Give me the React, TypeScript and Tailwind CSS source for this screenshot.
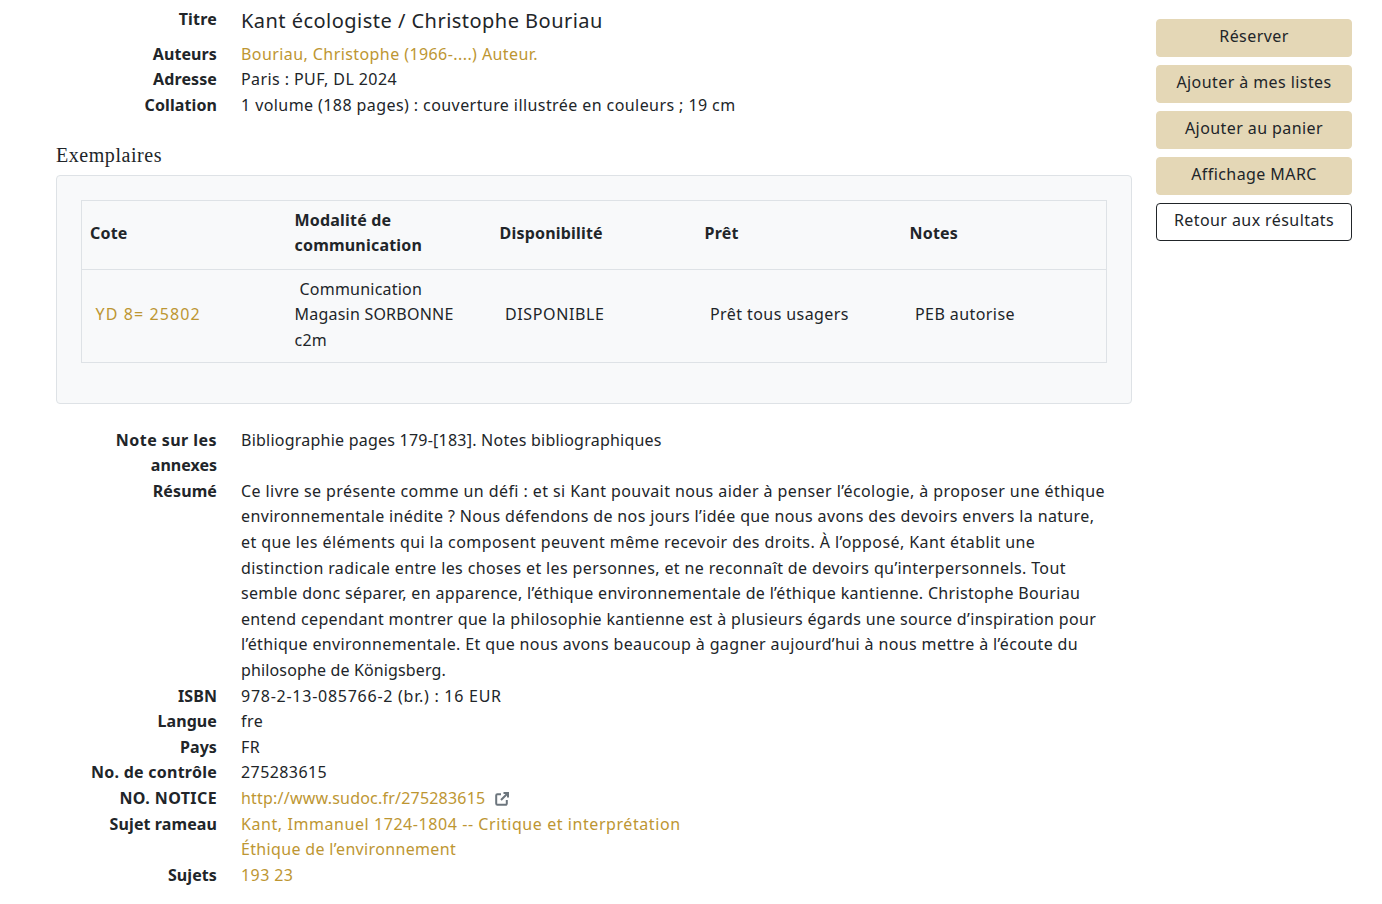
import type { ReactNode } from "react"

// letter-spacing is tuned per line, the original webfont isn't available
const resume = [
  { text: "Ce livre se présente comme un défi : et si Kant pouvait nous aider à penser l’écologie, à proposer une éthique", track: "tracking-[0.42px]" },
  { text: "environnementale inédite ? Nous défendons de nos jours l’idée que nous avons des devoirs envers la nature,", track: "tracking-[0.363px]" },
  { text: "et que les éléments qui la composent peuvent même recevoir des droits. À l’opposé, Kant établit une", track: "tracking-[0.42px]" },
  { text: "distinction radicale entre les choses et les personnes, et ne reconnaît de devoirs qu’interpersonnels. Tout", track: "tracking-[0.373px]" },
  { text: "semble donc séparer, en apparence, l’éthique environnementale de l’éthique kantienne. Christophe Bouriau", track: "tracking-[0.333px]" },
  { text: "entend cependant montrer que la philosophie kantienne est à plusieurs égards une source d’inspiration pour", track: "tracking-[0.345px]" },
  { text: "l’éthique environnementale. Et que nous avons beaucoup à gagner aujourd’hui à nous mettre à l’écoute du", track: "tracking-[0.371px]" },
  { text: "philosophe de Königsberg.", track: "tracking-[0.14px]" },
]

function Row({ label, children }: { label: ReactNode; children: ReactNode }) {
  return (
    <div className="grid grid-cols-[161px_1fr] gap-x-6">
      <div className="text-right font-bold tracking-[0.1px]">{label}</div>
      <div>{children}</div>
    </div>
  )
}

function Action({ children, outline }: { children: ReactNode; outline?: boolean }) {
  return (
    <button
      className={
        outline
          ? "h-[38px] w-full rounded border border-[#212529] bg-white pb-[2px] text-center"
          : "h-[38px] w-full rounded border border-[#e4d7b6] bg-[#e4d7b6] pb-[2px] text-center"
      }
    >
      {children}
    </button>
  )
}

const linkClass = "text-[#bd9632]"
const headCell = "px-2 pt-[7px] pb-[10px] align-middle font-bold tracking-[0.2px]"
const bodyCell = "pt-[6.7px] pr-2 pb-[8.6px] pl-[13.5px] align-middle"

export default function App() {
  return (
    <div className="flex min-h-[904px] bg-white pl-14 font-['Noto_Sans',sans-serif] text-[16px] leading-[25.6px] tracking-[0.42px] text-[#212529]">
      <main className="w-[1076px]">
        <div className="grid h-[41.8px] grid-cols-[161px_1fr] gap-x-6">
          <div className="pt-[7px] text-right font-bold tracking-[0.2px]">Titre</div>
          <div className="pt-[5px] text-[20px] leading-[32px] tracking-[0.47px]">Kant écologiste / Christophe Bouriau</div>
        </div>
        <Row label="Auteurs">
          <span className={linkClass}>Bouriau, Christophe (1966-....) Auteur.</span>
        </Row>
        <Row label="Adresse">Paris : PUF, DL 2024</Row>
        <Row label="Collation">1 volume (188 pages) : couverture illustrée en couleurs ; 19 cm</Row>

        <h2 className="mt-[24.2px] mb-2 font-['Liberation_Serif',serif] text-[20px] leading-[24px] tracking-[0.55px]">Exemplaires</h2>
        <section className="rounded border border-[#dee2e6] bg-[#f8f9fa] px-6 pt-6 pb-10">
          <table className="w-full table-fixed border border-[#dee2e6]">
            <thead>
              <tr className="border-b border-[#dee2e6] text-left">
                <th className={headCell}>Cote</th>
                <th className={headCell}>Modalité de communication</th>
                <th className={headCell}>Disponibilité</th>
                <th className={headCell}>Prêt</th>
                <th className={headCell}>Notes</th>
              </tr>
            </thead>
            <tbody>
              <tr>
                <td className={bodyCell}>
                  <span className={`${linkClass} tracking-[1.1px]`}>YD 8= 25802</span>
                </td>
                <td className="px-2 pt-[6.7px] pb-[8.6px] align-middle tracking-[0.22px]">
                  <div className="pl-[5px]">Communication</div>
                  Magasin SORBONNE c2m
                </td>
                <td className={`${bodyCell} tracking-[0.62px]`}>DISPONIBLE</td>
                <td className={bodyCell}>Prêt tous usagers</td>
                <td className={bodyCell}>PEB autorise</td>
              </tr>
            </tbody>
          </table>
        </section>

        <div className="mt-[23.7px]">
          <Row label={<><span className="tracking-[0.45px]">Note sur les</span> <span className="tracking-[0px]">annexes</span></>}>
            <span className="tracking-[0.23px]">Bibliographie pages 179-[183]. Notes bibliographiques</span>
          </Row>
          <Row label="Résumé">
            {resume.map((line) => (
              <div key={line.text} className={`whitespace-nowrap ${line.track}`}>{line.text}</div>
            ))}
          </Row>
          <Row label="ISBN">
            <span className="tracking-[0.74px]">978-2-13-085766-2 (br.) : 16 EUR</span>
          </Row>
          <Row label="Langue">fre</Row>
          <Row label="Pays">FR</Row>
          <Row label={<span className="tracking-[0.25px]">No. de contrôle</span>}>275283615</Row>
          <Row label={<span className="tracking-[0.4px]">NO. NOTICE</span>}>
            <span className={`${linkClass} tracking-[0.21px]`}>http://www.sudoc.fr/275283615</span>
            <svg viewBox="0 0 16 16" fill="none" stroke="#6c757d" strokeWidth="2" className="ml-[9px] inline-block h-4 w-4 align-[-3px]">
              <path d="M7 3.2H3.4A1.2 1.2 0 0 0 2.2 4.4v8.2a1.2 1.2 0 0 0 1.2 1.2h8.2a1.2 1.2 0 0 0 1.2-1.2V9" />
              <path d="M9.5 2h4.5v4.5M14 2 7 9" />
            </svg>
          </Row>
          <Row label="Sujet rameau">
            <div className={`${linkClass} tracking-[0.57px]`}>Kant, Immanuel 1724-1804 -- Critique et interprétation</div>
            <div className={`${linkClass} tracking-[0.34px]`}>Éthique de l’environnement</div>
          </Row>
          <Row label="Sujets">
            <span className={linkClass}>193 23</span>
          </Row>
        </div>
      </main>
      <aside className="ml-6 flex w-[196px] flex-col gap-2 pt-[19px]">
        <Action>Réserver</Action>
        <Action>Ajouter à mes listes</Action>
        <Action>Ajouter au panier</Action>
        <Action>Affichage MARC</Action>
        <Action outline>Retour aux résultats</Action>
      </aside>
    </div>
  )
}
